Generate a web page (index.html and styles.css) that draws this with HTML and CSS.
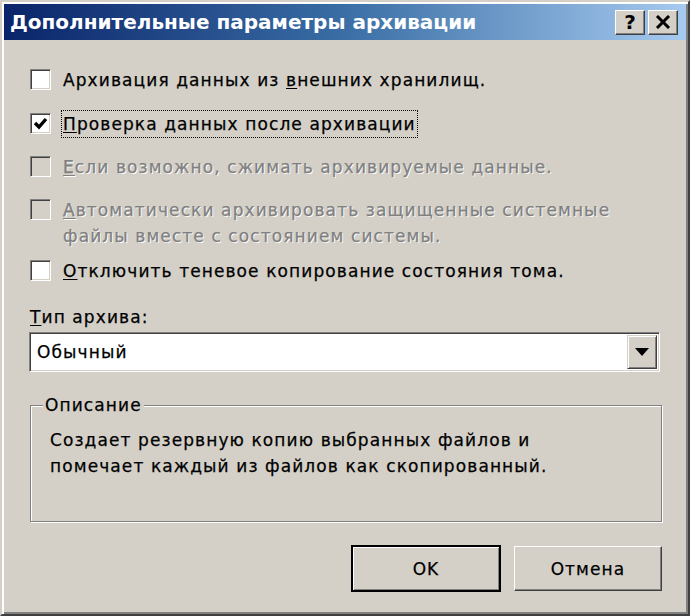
FILE: index.html
```html
<!DOCTYPE html>
<html lang="ru">
<head>
<meta charset="utf-8">
<title>Дополнительные параметры архивации</title>
<link rel="stylesheet" href="styles.css">
</head>
<body>
<div class="window">
  <div class="titlebar">
    <span class="title">Дополнительные параметры архивации</span>
    <div class="tbtns">
      <span class="tbtn help">?</span>
      <span class="tbtn close"><svg width="16" height="14" viewBox="0 0 16 14"><path d="M2 1 L14 13 M14 1 L2 13" stroke="#000" stroke-width="3" fill="none"/></svg></span>
    </div>
  </div>
  <div class="content">
    <div class="row r1"><span class="cb"></span><span class="lbl">Архивация данных из <u>в</u>нешних хранилищ.</span></div>
    <div class="row r2"><span class="cb"><svg width="17" height="17" viewBox="0 0 17 17"><path d="M3 8 L7 12 L14 4" stroke="#000" stroke-width="3.4" fill="none"/></svg></span><span class="lbl focus"><u>П</u>роверка данных после архивации</span></div>
    <div class="row r3 disabled"><span class="cb"></span><span class="lbl"><u>Е</u>сли возможно, сжимать архивируемые данные.</span></div>
    <div class="row r4 disabled"><span class="cb"></span><span class="lbl"><u>А</u>втоматически архивировать защищенные системные<br>файлы вместе с состоянием системы.</span></div>
    <div class="row r5"><span class="cb"></span><span class="lbl"><u>О</u>тключить теневое копирование состояния тома.</span></div>
    <div class="field-label"><u>Т</u>ип архива:</div>
    <div class="combo">
      <span class="combo-text">Обычный</span>
      <span class="combo-btn"><svg width="14" height="8" viewBox="0 0 14 8"><path d="M0 0 H14 L7 8 Z" fill="#000"/></svg></span>
    </div>
    <div class="group">
      <span class="legend">Описание</span>
      <div class="desc">Создает резервную копию выбранных файлов и<br>помечает каждый из файлов как скопированный.</div>
    </div>
    <div class="buttons">
      <span class="btn default">OK</span>
      <span class="btn">Отмена</span>
    </div>
  </div>
</div>
</body>
</html>
```
FILE: styles.css
```css
body {
  margin: 0;
  background: #d4d0c8;
  font-family: "DejaVu Sans", "Liberation Sans", sans-serif;
}

.window {
  width: 690px;
  height: 616px;
  box-sizing: border-box;
  border: 2px solid;
  border-color: #d4d0c8 #404040 #404040 #d4d0c8;
  box-shadow: inset 2px 2px #fff, inset -2px -2px #808080;
  padding: 2px;
  background: #d4d0c8;
  display: flex;
  flex-direction: column;
}

.titlebar {
  height: 36px;
  flex: none;
  display: flex;
  align-items: center;
  justify-content: space-between;
  padding: 0 8px 0 6px;
  background: linear-gradient(to right, #0a246a 0%, #3a6ea5 50%, #a6caf0 100%);
}

.title {
  color: #fff;
  font-weight: bold;
  font-size: 20px;
  letter-spacing: 0;
}

.tbtns {
  display: flex;
  gap: 3px;
}

.tbtn {
  width: 30px;
  height: 25px;
  box-sizing: border-box;
  background: #d4d0c8;
  border: 1px solid;
  border-color: #fff #404040 #404040 #fff;
  box-shadow: inset -1px -1px #808080;
  display: flex;
  align-items: center;
  justify-content: center;
  font-weight: bold;
  font-size: 20px;
  color: #000;
}

.content {
  flex: 1;
  padding: 27px 24px 0 26px;
  display: flex;
  flex-direction: column;
  font-size: 17px;
  letter-spacing: 1.1px;
  line-height: 26px;
  color: #000;
  -webkit-text-stroke: 0.25px currentColor;
}

.row {
  display: flex;
  align-items: flex-start;
  gap: 12px;
}

.r1 { margin-bottom: 18px; }
.r2 { margin-bottom: 17px; }
.r3 { margin-bottom: 17px; }
.r4 { margin-bottom: 9px; }
.r5 { margin-bottom: 20px; }

.cb {
  width: 21px;
  height: 21px;
  margin-top: 2px;
  flex: none;
  box-sizing: border-box;
  background: #fff;
  border: 1px solid;
  border-color: #808080 #fff #fff #808080;
  box-shadow: inset 1px 1px #404040, inset -1px -1px #d4d0c8;
  display: flex;
  align-items: center;
  justify-content: center;
}

.disabled .cb {
  background: #d4d0c8;
}

.disabled .lbl {
  color: #808080;
  text-shadow: 1px 1px 0 #fff;
}

.lbl u,
.field-label u {
  text-underline-offset: 2px;
}

.focus {
  outline: 1px dotted #000;
  margin-left: -1px;
  padding: 0 1px;
}

.field-label {
  margin-bottom: 2px;
}

.combo {
  height: 40px;
  margin: 0 2px 0 -1px;
  box-sizing: border-box;
  background: #fff;
  border: 1px solid;
  border-color: #808080 #fff #fff #808080;
  box-shadow: inset 1px 1px #404040, inset -1px -1px #d4d0c8;
  display: flex;
  align-items: center;
  justify-content: space-between;
  padding: 2px;
}

.combo-text {
  padding-left: 5px;
}

.combo-btn {
  width: 30px;
  height: 34px;
  box-sizing: border-box;
  background: #d4d0c8;
  border: 1px solid;
  border-color: #d4d0c8 #404040 #404040 #d4d0c8;
  box-shadow: inset 1px 1px #fff, inset -1px -1px #808080;
  display: flex;
  align-items: center;
  justify-content: center;
}

.group {
  position: relative;
  margin-top: 33px;
  height: 117px;
  box-sizing: border-box;
  border: 1px solid #808080;
  box-shadow: inset 1px 1px #fff, 1px 1px #fff;
  padding: 21px 0 0 19px;
}

.legend {
  position: absolute;
  top: -14px;
  left: 12px;
  padding: 0 2px;
  background: #d4d0c8;
}

.buttons {
  margin-top: 23px;
  display: flex;
  justify-content: flex-end;
  align-items: center;
  gap: 13px;
}

.btn {
  width: 148px;
  height: 45px;
  box-sizing: border-box;
  background: #d4d0c8;
  border: 1px solid;
  border-color: #fff #404040 #404040 #fff;
  box-shadow: inset -1px -1px #808080;
  display: flex;
  align-items: center;
  justify-content: center;
}

.btn.default {
  width: 150px;
  height: 47px;
  border: 2px solid #000;
  box-shadow: inset 1px 1px #fff, inset -1px -1px #808080;
}
```
